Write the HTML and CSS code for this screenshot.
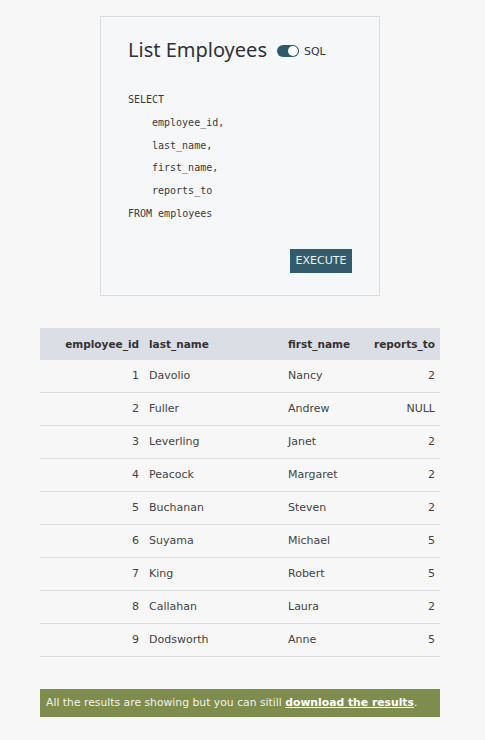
FILE: index.html
```html
<!DOCTYPE html>
<html>
<head>
<meta charset="utf-8">
<link rel="stylesheet" href="styles.css">
</head>
<body>
<div class="page">
  <div class="card">
    <div class="card-head">
      <h1 class="title">List Employees</h1>
      <label class="toggle">
        <span class="switch"><span class="knob"></span></span>
        <span class="toggle-label">SQL</span>
      </label>
    </div>
    <div class="code">
      <div class="line">SELECT</div>
      <div class="line indent">employee_id,</div>
      <div class="line indent">last_name,</div>
      <div class="line indent">first_name,</div>
      <div class="line indent">reports_to</div>
      <div class="line">FROM employees</div>
    </div>
    <div class="actions">
      <button class="btn">EXECUTE</button>
    </div>
  </div>

  <table class="results">
    <thead>
      <tr><th class="num">employee_id</th><th>last_name</th><th>first_name</th><th class="num">reports_to</th></tr>
    </thead>
    <tbody>
      <tr><td class="num">1</td><td>Davolio</td><td>Nancy</td><td class="num">2</td></tr>
      <tr><td class="num">2</td><td>Fuller</td><td>Andrew</td><td class="num">NULL</td></tr>
      <tr><td class="num">3</td><td>Leverling</td><td>Janet</td><td class="num">2</td></tr>
      <tr><td class="num">4</td><td>Peacock</td><td>Margaret</td><td class="num">2</td></tr>
      <tr><td class="num">5</td><td>Buchanan</td><td>Steven</td><td class="num">2</td></tr>
      <tr><td class="num">6</td><td>Suyama</td><td>Michael</td><td class="num">5</td></tr>
      <tr><td class="num">7</td><td>King</td><td>Robert</td><td class="num">5</td></tr>
      <tr><td class="num">8</td><td>Callahan</td><td>Laura</td><td class="num">2</td></tr>
      <tr><td class="num">9</td><td>Dodsworth</td><td>Anne</td><td class="num">5</td></tr>
    </tbody>
  </table>

  <div class="notice">All the results are showing but you can sitill <a href="#" class="notice-link">download the results</a>.</div>
</div>
</body>
</html>
```

FILE: styles.css
```css
html, body {
  margin: 0;
  padding: 0;
  background: #f7f7f7;
}
body {
  font-family: "DejaVu Sans", sans-serif;
  color: #3a3a3a;
}
.page {
  width: 400px;
  margin-left: 40px;
  padding-top: 16px;
}
.card {
  width: 280px;
  box-sizing: border-box;
  margin: 0 auto;
  background: #f6f7f9;
  border: 1px solid #dadce1;
  padding: 20px 27px 22px 27px;
}
.card-head {
  display: flex;
  align-items: center;
}
.title {
  margin: 0;
  font-family: "Noto Sans", sans-serif;
  font-weight: 400;
  font-size: 20px;
  line-height: 26px;
  color: #2f3338;
}
.toggle {
  display: flex;
  align-items: center;
  margin-left: 10px;
  margin-top: 2px;
}
.switch {
  width: 22px;
  height: 12px;
  border-radius: 6px;
  background: #2f5a6b;
  position: relative;
}
.knob {
  position: absolute;
  right: 1px;
  top: 1px;
  width: 10px;
  height: 10px;
  border-radius: 50%;
  background: #fff;
}
.toggle-label {
  font-size: 11px;
  margin-left: 5px;
  color: #333;
}
.code {
  margin-top: 26px;
  font-family: "DejaVu Sans Mono", monospace;
  font-size: 10px;
  line-height: 22.8px;
  color: #3a3a3a;
}
.indent {
  padding-left: 24px;
}
.actions {
  display: flex;
  justify-content: flex-end;
  margin-top: 23px;
}
.btn {
  font-family: "DejaVu Sans", sans-serif;
  font-size: 11px;
  color: #eef3f5;
  background: #335b6c;
  border: none;
  border-radius: 0;
  padding: 0 4px;
  height: 24px;
  width: 62px;
}
.results {
  margin-top: 32px;
  width: 400px;
  border-collapse: collapse;
  font-size: 11px;
  color: #444;
}
.results th {
  background: #dcdee5;
  font-weight: bold;
  font-size: 10.5px;
  text-align: left;
  height: 32px;
  padding: 0 5px;
  color: #333;
}
.results td {
  height: 32px;
  padding: 0 5px;
  border-bottom: 1px solid #dcdcdc;
}
.results .num {
  text-align: right;
}
.results th:nth-child(1) { width: 94px; }
.results th:nth-child(2) { width: 129px; }
.results th:nth-child(3) { width: 60px; }
.notice {
  margin-top: 32px;
  background: #7e8c4d;
  color: #f2f3ea;
  font-size: 10.8px;
  height: 28px;
  line-height: 28px;
  padding: 0 6px;
}
.notice-link {
  color: #fff;
  font-weight: bold;
  text-decoration: underline;
}
```
